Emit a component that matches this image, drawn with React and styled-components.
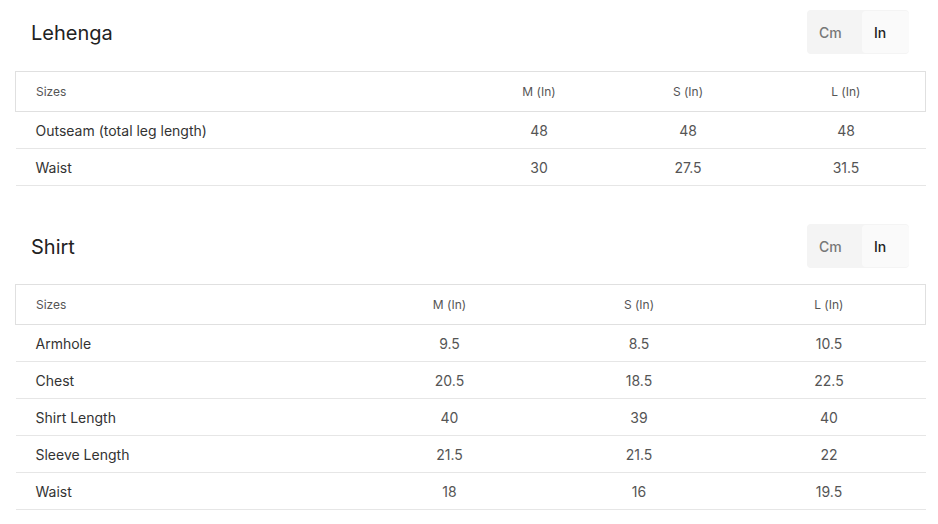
import React from "react";
import styled, { createGlobalStyle } from "styled-components";

const Global = createGlobalStyle`
  html, body { margin: 0; padding: 0; background: #fff; }
  body { font-family: Inter, "Noto Sans", sans-serif; color: #333; }
`;

const Page = styled.div`
  padding: 10px 13px 0 15px;
  display: flex;
  flex-direction: column;
  gap: 38px;
`;

const Section = styled.section`
  display: flex;
  flex-direction: column;
  gap: 16px;
  &:first-child { gap: 17px; }
`;

const Header = styled.div`
  display: flex;
  align-items: center;
  justify-content: space-between;
  padding-left: 16px;
  padding-right: 16px;
`;

const Title = styled.h2`
  margin: 0;
  padding-top: 2px;
  font-size: 20px;
  font-weight: 400;
  color: #222;
`;

const Toggle = styled.div`
  display: flex;
  background: #f4f4f4;
  border-radius: 4px;
  padding: 1px 0;
  height: 44px;
  box-sizing: border-box;
`;

const ToggleBtn = styled.button`
  border: none;
  font-family: inherit;
  font-size: 14px;
  font-weight: 500;
  text-align: left;
  padding: 0 0 0 12px;
  width: ${(p) => (p.$active ? "47px" : "55px")};
  border-radius: 4px;
  background: ${(p) => (p.$active ? "#fafafa" : "transparent")};
  color: ${(p) => (p.$active ? "#222" : "#777")};
  cursor: pointer;
`;

const Table = styled.table`
  width: 100%;
  table-layout: fixed;
  border-collapse: collapse;
  font-size: 14px;
`;

const HeadCell = styled.th`
  height: 39px;
  padding: 0 20px;
  font-size: 12px;
  font-weight: 400;
  color: #555;
  text-align: ${(p) => (p.$left ? "left" : "center")};
  border-top: 1px solid #e0e0e0;
  border-bottom: 1px solid #e0e0e0;
  &:first-child { border-left: 1px solid #e0e0e0; }
  &:last-child { border-right: 1px solid #e0e0e0; }
`;

const Cell = styled.td`
  height: 36px;
  padding: 0 20px;
  color: ${(p) => (p.$left ? "#333" : "#555")};
  text-align: ${(p) => (p.$left ? "left" : "center")};
  border-bottom: 1px solid #e6e6e6;
`;

const data = [
  {
    title: "Lehenga",
    cols: [453, 141, 157, 159],
    rows: [
      ["Outseam (total leg length)", "48", "48", "48"],
      ["Waist", "30", "27.5", "31.5"],
    ],
  },
  {
    title: "Shirt",
    cols: [338, 192, 187, 193],
    rows: [
      ["Armhole", "9.5", "8.5", "10.5"],
      ["Chest", "20.5", "18.5", "22.5"],
      ["Shirt Length", "40", "39", "40"],
      ["Sleeve Length", "21.5", "21.5", "22"],
      ["Waist", "18", "16", "19.5"],
    ],
  },
];

export default function App() {
  return (
    <>
      <Global />
      <Page>
        {data.map((s) => (
          <Section key={s.title}>
            <Header>
              <Title>{s.title}</Title>
              <Toggle>
                <ToggleBtn>Cm</ToggleBtn>
                <ToggleBtn $active>In</ToggleBtn>
              </Toggle>
            </Header>
            <Table>
              <colgroup>
                {s.cols.map((w, i) => (
                  <col key={i} style={{ width: w }} />
                ))}
              </colgroup>
              <thead>
                <tr>
                  <HeadCell $left>Sizes</HeadCell>
                  <HeadCell>M (In)</HeadCell>
                  <HeadCell>S (In)</HeadCell>
                  <HeadCell>L (In)</HeadCell>
                </tr>
              </thead>
              <tbody>
                {s.rows.map((r) => (
                  <tr key={r[0]}>
                    {r.map((c, i) => (
                      <Cell key={i} $left={i === 0}>{c}</Cell>
                    ))}
                  </tr>
                ))}
              </tbody>
            </Table>
          </Section>
        ))}
      </Page>
    </>
  );
}
